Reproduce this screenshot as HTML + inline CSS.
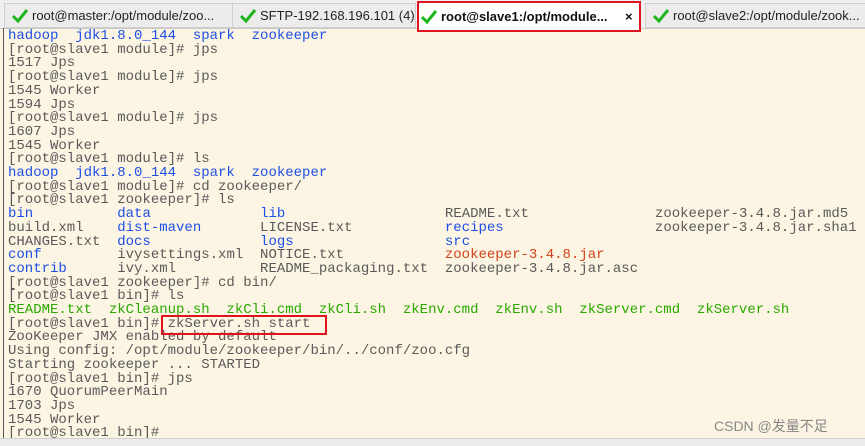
<!DOCTYPE html>
<html><head><meta charset="utf-8"><style>
body{margin:0;width:865px;height:445px;overflow:hidden;background:#fcf5e3;position:relative;font-family:"Liberation Sans",sans-serif}
.bar{position:absolute;left:0;top:0;width:865px;height:28px;background:#f0f0f0;border-bottom:1px solid #c8c8c8}
.tab{position:absolute;top:3px;height:23px;background:#ececec;border:1px solid #cfcfcf;font-size:13px;color:#222;line-height:23px;white-space:nowrap;overflow:hidden}
.tab svg{vertical-align:-3px;margin:0 4px 0 7px}
.act{background:#fff;border:2px solid #e0141e;top:1px;height:27px;line-height:27px;font-weight:bold;color:#111}
pre{position:absolute;left:8px;top:30px;margin:0;font-family:"Liberation Mono",monospace;font-size:14px;line-height:13.7px;color:#5a5a5a;letter-spacing:0}
.b{color:#1d4fe6}.g{color:#2aa800}.r{color:#d2421a}
.lb{position:absolute;left:3px;top:28px;width:1px;height:410px;background:#555}
.bot{position:absolute;left:0;top:438px;width:865px;height:7px;background:#ececec;border-top:1px solid #d0d0d0}
.box{position:absolute;border:2px solid #e0141e}
.wm{position:absolute;left:714px;top:416px;font-size:14px;color:#888;font-family:"Liberation Sans","Noto Sans CJK SC",sans-serif}
</style></head><body>
<div class="bar">
<div class="tab" style="left:4px;width:227px"><svg width="16" height="14" viewBox="0 0 16 14"><path d="M1 7l5 5 9-11" stroke="#1cb51c" stroke-width="3" fill="none"/></svg>root@master:/opt/module/zoo...</div>
<div class="tab" style="left:232px;width:182px"><svg width="16" height="14" viewBox="0 0 16 14"><path d="M1 7l5 5 9-11" stroke="#1cb51c" stroke-width="3" fill="none"/></svg>SFTP-192.168.196.101 (4)</div>
<div class="tab act" style="left:417px;width:220px"><svg width="16" height="14" viewBox="0 0 16 14" style="margin-left:2px"><path d="M1 7l5 5 9-11" stroke="#1cb51c" stroke-width="3" fill="none"/></svg>root@slave1:/opt/module... <span style="position:absolute;left:206px">×</span></div>
<div class="tab" style="left:645px;width:225px"><svg width="16" height="14" viewBox="0 0 16 14"><path d="M1 7l5 5 9-11" stroke="#1cb51c" stroke-width="3" fill="none"/></svg>root@slave2:/opt/module/zook...</div>
</div>
<div class="lb"></div>
<pre><span class="b">hadoop  jdk1.8.0_144  spark  zookeeper</span>
[root@slave1 module]# jps
1517 Jps
[root@slave1 module]# jps
1545 Worker
1594 Jps
[root@slave1 module]# jps
1607 Jps
1545 Worker
[root@slave1 module]# ls
<span class="b">hadoop  jdk1.8.0_144  spark  zookeeper</span>
[root@slave1 module]# cd zookeeper/
[root@slave1 zookeeper]# ls
<span class="b">bin</span>          <span class="b">data</span>             <span class="b">lib</span>                   README.txt               zookeeper-3.4.8.jar.md5
build.xml    <span class="b">dist-maven</span>       LICENSE.txt           <span class="b">recipes</span>                  zookeeper-3.4.8.jar.sha1
CHANGES.txt  <span class="b">docs</span>             <span class="b">logs</span>                  <span class="b">src</span>
<span class="b">conf</span>         ivysettings.xml  NOTICE.txt            <span class="r">zookeeper-3.4.8.jar</span>
<span class="b">contrib</span>      ivy.xml          README_packaging.txt  zookeeper-3.4.8.jar.asc
[root@slave1 zookeeper]# cd bin/
[root@slave1 bin]# ls
<span class="g">README.txt  zkCleanup.sh  zkCli.cmd  zkCli.sh  zkEnv.cmd  zkEnv.sh  zkServer.cmd  zkServer.sh</span>
[root@slave1 bin]# zkServer.sh start
ZooKeeper JMX enabled by default
Using config: /opt/module/zookeeper/bin/../conf/zoo.cfg
Starting zookeeper ... STARTED
[root@slave1 bin]# jps
1670 QuorumPeerMain
1703 Jps
1545 Worker
[root@slave1 bin]#</pre>
<div class="box" style="left:161px;top:315px;width:162px;height:16px"></div>
<div class="wm">CSDN @发量不足</div>
<div class="bot"></div>
</body></html>
